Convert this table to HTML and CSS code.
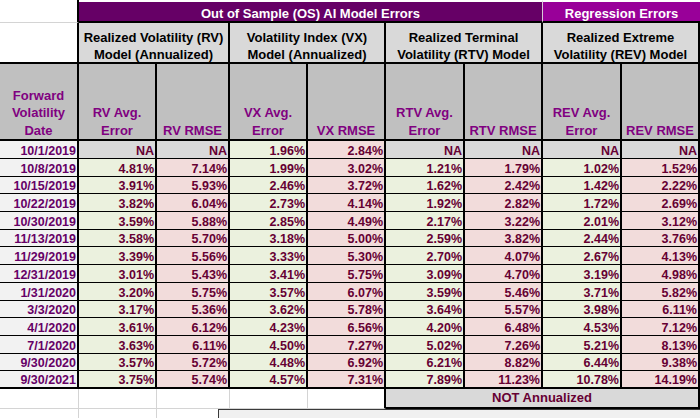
FILE: index.html
```html
<!DOCTYPE html>
<html>
<head>
<meta charset="utf-8">
<link rel="stylesheet" href="styles.css">
</head>
<body>
<div class="sheet">
  <div class="corner1"></div>
  <div class="title title-os">Out of Sample (OS) AI Model Errors</div>
  <div class="title title-reg">Regression Errors</div>

  <div class="corner2"></div>
  <div class="grp">Realized Volatility (RV)<br>Model (Annualized)</div>
  <div class="grp">Volatility Index (VX)<br>Model (Annualized)</div>
  <div class="grp">Realized Terminal<br>Volatility (RTV) Model</div>
  <div class="grp">Realized Extreme<br>Volatility (REV) Model</div>

  <div class="hdr"><span>Forward<br>Volatility<br>Date</span></div>
  <div class="hdr"><span>RV Avg.<br>Error</span></div>
  <div class="hdr"><span>RV RMSE</span></div>
  <div class="hdr"><span>VX Avg.<br>Error</span></div>
  <div class="hdr"><span>VX RMSE</span></div>
  <div class="hdr"><span>RTV Avg.<br>Error</span></div>
  <div class="hdr"><span>RTV RMSE</span></div>
  <div class="hdr"><span>REV Avg.<br>Error</span></div>
  <div class="hdr"><span>REV RMSE</span></div>

  <div class="d date">10/1/2019</div><div class="d na">NA</div><div class="d na">NA</div><div class="d g">1.96%</div><div class="d p">2.84%</div><div class="d na">NA</div><div class="d na">NA</div><div class="d na">NA</div><div class="d na">NA</div>
  <div class="d date">10/8/2019</div><div class="d g">4.81%</div><div class="d p">7.14%</div><div class="d g">1.99%</div><div class="d p">3.02%</div><div class="d g">1.21%</div><div class="d p">1.79%</div><div class="d g">1.02%</div><div class="d p">1.52%</div>
  <div class="d date">10/15/2019</div><div class="d g">3.91%</div><div class="d p">5.93%</div><div class="d g">2.46%</div><div class="d p">3.72%</div><div class="d g">1.62%</div><div class="d p">2.42%</div><div class="d g">1.42%</div><div class="d p">2.22%</div>
  <div class="d date">10/22/2019</div><div class="d g">3.82%</div><div class="d p">6.04%</div><div class="d g">2.73%</div><div class="d p">4.14%</div><div class="d g">1.92%</div><div class="d p">2.82%</div><div class="d g">1.72%</div><div class="d p">2.69%</div>
  <div class="d date">10/30/2019</div><div class="d g">3.59%</div><div class="d p">5.88%</div><div class="d g">2.85%</div><div class="d p">4.49%</div><div class="d g">2.17%</div><div class="d p">3.22%</div><div class="d g">2.01%</div><div class="d p">3.12%</div>
  <div class="d date">11/13/2019</div><div class="d g">3.58%</div><div class="d p">5.70%</div><div class="d g">3.18%</div><div class="d p">5.00%</div><div class="d g">2.59%</div><div class="d p">3.82%</div><div class="d g">2.44%</div><div class="d p">3.76%</div>
  <div class="d date">11/29/2019</div><div class="d g">3.39%</div><div class="d p">5.56%</div><div class="d g">3.33%</div><div class="d p">5.30%</div><div class="d g">2.70%</div><div class="d p">4.07%</div><div class="d g">2.67%</div><div class="d p">4.13%</div>
  <div class="d date">12/31/2019</div><div class="d g">3.01%</div><div class="d p">5.43%</div><div class="d g">3.41%</div><div class="d p">5.75%</div><div class="d g">3.09%</div><div class="d p">4.70%</div><div class="d g">3.19%</div><div class="d p">4.98%</div>
  <div class="d date">1/31/2020</div><div class="d g">3.20%</div><div class="d p">5.75%</div><div class="d g">3.57%</div><div class="d p">6.07%</div><div class="d g">3.59%</div><div class="d p">5.46%</div><div class="d g">3.71%</div><div class="d p">5.82%</div>
  <div class="d date">3/3/2020</div><div class="d g">3.17%</div><div class="d p">5.36%</div><div class="d g">3.62%</div><div class="d p">5.78%</div><div class="d g">3.64%</div><div class="d p">5.57%</div><div class="d g">3.98%</div><div class="d p">6.11%</div>
  <div class="d date">4/1/2020</div><div class="d g">3.61%</div><div class="d p">6.12%</div><div class="d g">4.23%</div><div class="d p">6.56%</div><div class="d g">4.20%</div><div class="d p">6.48%</div><div class="d g">4.53%</div><div class="d p">7.12%</div>
  <div class="d date">7/1/2020</div><div class="d g">3.63%</div><div class="d p">6.11%</div><div class="d g">4.50%</div><div class="d p">7.27%</div><div class="d g">5.02%</div><div class="d p">7.26%</div><div class="d g">5.21%</div><div class="d p">8.13%</div>
  <div class="d date">9/30/2020</div><div class="d g">3.57%</div><div class="d p">5.72%</div><div class="d g">4.48%</div><div class="d p">6.92%</div><div class="d g">6.21%</div><div class="d p">8.82%</div><div class="d g">6.44%</div><div class="d p">9.38%</div>
  <div class="d last date">9/30/2021</div><div class="d last g">3.75%</div><div class="d last p">5.74%</div><div class="d last g">4.57%</div><div class="d last p">7.31%</div><div class="d last g">7.89%</div><div class="d last p">11.23%</div><div class="d last g">10.78%</div><div class="d last p">14.19%</div>

  <div class="blank"></div><div class="blank"></div><div class="blank"></div><div class="blank"></div><div class="blank edge"></div>
  <div class="note">NOT Annualized</div>

  <div class="blank2"></div><div class="blank2"></div><div class="blank2"></div><div class="blank2"></div><div class="blank2"></div><div class="blank2"></div><div class="blank2"></div><div class="blank2"></div><div class="blank2"></div>

  <div class="shape"></div>
</div>
</body>
</html>
```

FILE: styles.css
```css
html, body {
  margin: 0;
  padding: 0;
  background: #ffffff;
}

body {
  font-family: "Liberation Sans", Arial, sans-serif;
  font-weight: bold;
}

.sheet {
  position: relative;
  width: 700px;
  height: 418px;
  overflow: hidden;
  display: grid;
  grid-template-columns: 79px 78px 73px 78px 78px 79px 78px 79px 78px;
  grid-template-rows: 23px 41px 77px 18px repeat(13, 17.692px) 20px 9px;
}

.sheet > div {
  box-sizing: border-box;
  min-width: 0;
  min-height: 0;
}

.corner1 {
  background: #fff;
  border-right: 2px solid #000;
  border-bottom: 1px solid #d4d4d4;
}

.corner2 {
  background: #fff;
  border-right: 2px solid #000;
  border-bottom: 2px solid #000;
}

.title {
  color: #fff;
  font-size: 13px;
  line-height: 19px;
  padding-top: 2px;
  text-align: center;
  border-top: 2px solid #fff;
  border-bottom: 2px solid #000;
  white-space: nowrap;
}

.title-os {
  grid-column: 2 / 8;
  background: #660066;
  border-right: 1px solid #d8c8d8;
}

.title-reg {
  grid-column: 8 / 10;
  background: #990099;
}

.grp {
  grid-column: span 2;
  background: #d9d9d9;
  color: #000;
  font-size: 13px;
  line-height: 17.3px;
  padding-top: 5.5px;
  text-align: center;
  white-space: nowrap;
  border-right: 2px solid #000;
  border-bottom: 2px solid #000;
}

.hdr {
  background: #c0c0c0;
  color: #800080;
  font-size: 13px;
  line-height: 17.3px;
  text-align: center;
  white-space: nowrap;
  display: flex;
  flex-direction: column;
  justify-content: flex-end;
  border-right: 2px solid #000;
  border-bottom: 2px solid #000;
}

.d {
  font-size: 12.5px;
  line-height: 14px;
  color: #660033;
  display: flex;
  align-items: flex-end;
  justify-content: flex-end;
  padding-right: 1px;
  white-space: nowrap;
  border-right: 2px solid #000;
  border-bottom: 1px solid #000;
}

.d.last {
  border-bottom: 2px solid #000;
}

.date {
  background: #f2f2f2;
  color: #660066;
}

.na {
  background: #d9d9d9;
}

.g {
  background: #ebf1de;
}

.p {
  background: #f2dcdb;
}

.blank {
  background: #fff;
  border-right: 1px solid #d4d4d4;
  border-bottom: 1px solid #d4d4d4;
}

.blank.edge {
  border-right: 2px solid #000;
}

.note {
  grid-column: 6 / 10;
  background: #d9d9d9;
  color: #660033;
  font-size: 13px;
  line-height: 18px;
  text-align: center;
  border-right: 2px solid #000;
  border-bottom: 2px solid #000;
}

.blank2 {
  background: #fff;
  border-right: 1px solid #d4d4d4;
}

.shape {
  position: absolute;
  left: 218px;
  top: 409px;
  width: 490px;
  height: 20px;
  background: #f0f0f0;
  border-top: 1px solid #3a3a3a;
  border-left: 1px solid #3a3a3a;
  box-sizing: border-box;
}
```
